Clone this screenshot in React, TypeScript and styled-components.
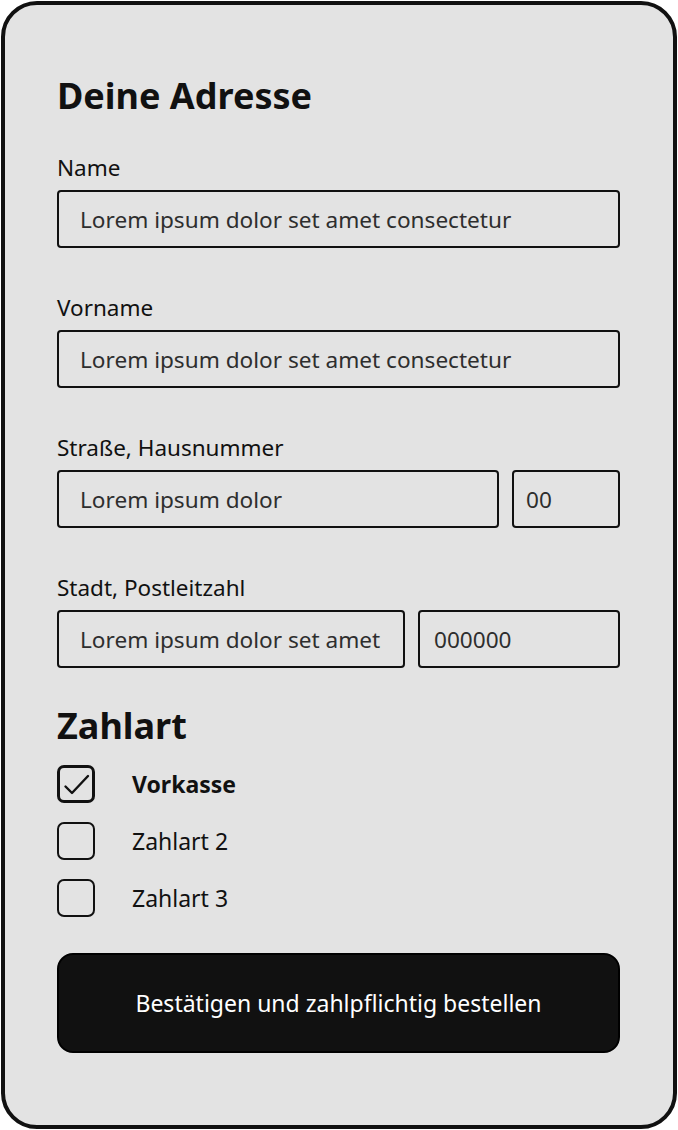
import { FC } from 'react';
import styled, { createGlobalStyle } from 'styled-components';

const GlobalStyle = createGlobalStyle`
  body {
    margin: 0;
    background: #fff;
    font-family: 'Noto Sans', 'Open Sans', sans-serif;
    color: #111;
  }
  * { box-sizing: border-box; }
`;

const Frame = styled.div`
  margin: 1px;
  width: 676px;
  height: 1128px;
  border: 4px solid #111;
  border-radius: 36px;
  background: #e3e3e3;
  padding: 69px 53px 0 52px;
  display: flex;
  flex-direction: column;
`;

const Heading = styled.h2<{ $gap?: number }>`
  margin: 0 0 ${(p) => p.$gap ?? 36}px;
  font-size: 36px;
  line-height: 43px;
  font-weight: 700;
  color: #111;
`;

const Field = styled.div<{ $gap?: number }>`
  display: flex;
  flex-direction: column;
  gap: 7px;
  margin-bottom: ${(p) => p.$gap ?? 45}px;
`;

const Label = styled.label`
  font-size: 22.5px;
  line-height: 30px;
  color: #111;
`;

const InputRow = styled.div`
  display: flex;
  gap: 13px;
`;

const Input = styled.div<{ $w?: number; $pad?: number }>`
  flex: ${(p) => (p.$w ? `0 0 ${p.$w}px` : '1 1 auto')};
  height: 58px;
  border: 2px solid #111;
  border-radius: 4px;
  padding: 0 0 0 ${(p) => p.$pad ?? 21}px;
  display: flex;
  align-items: center;
  font-size: 22.6px;
  color: #2e2e2e;
  white-space: nowrap;
  overflow: hidden;
`;

const Options = styled.div`
  display: flex;
  flex-direction: column;
  gap: 19px;
  margin-bottom: 36px;
`;

const Option = styled.div`
  display: flex;
  align-items: center;
  gap: 37px;
`;

const Box = styled.span<{ $checked?: boolean }>`
  width: 38px;
  height: 38px;
  flex: 0 0 38px;
  border: ${(p) => (p.$checked ? 3 : 2)}px solid #111;
  border-radius: 7px;
  display: flex;
  align-items: center;
  justify-content: center;
`;

const OptionText = styled.span<{ $bold?: boolean }>`
  font-size: 23px;
  font-weight: ${(p) => (p.$bold ? 700 : 400)};
  color: #111;
`;

const Submit = styled.button`
  height: 100px;
  width: 100%;
  border: 2px solid #000;
  border-radius: 16px;
  background: #111;
  color: #fff;
  font-family: inherit;
  font-size: 23px;
  cursor: pointer;
`;

const Check: FC = () => (
  <svg width="38" height="38" viewBox="0 0 38 38" style={{ margin: -3 }}>
    <polyline
      points="8.5,21.5 15,28 31,11"
      fill="none"
      stroke="#111"
      strokeWidth="2.4"
      strokeLinecap="round"
      strokeLinejoin="round"
    />
  </svg>
);

const payments = [
  { label: 'Vorkasse', checked: true },
  { label: 'Zahlart 2', checked: false },
  { label: 'Zahlart 3', checked: false },
];

const App: FC = () => {
  return (
    <>
      <GlobalStyle />
      <Frame>
        <Heading>Deine Adresse</Heading>

        <Field>
          <Label>Name</Label>
          <Input>Lorem ipsum dolor set amet consectetur</Input>
        </Field>

        <Field>
          <Label>Vorname</Label>
          <Input>Lorem ipsum dolor set amet consectetur</Input>
        </Field>

        <Field>
          <Label>Straße, Hausnummer</Label>
          <InputRow>
            <Input>Lorem ipsum dolor</Input>
            <Input $w={108} $pad={12}>00</Input>
          </InputRow>
        </Field>

        <Field $gap={36}>
          <Label>Stadt, Postleitzahl</Label>
          <InputRow>
            <Input>Lorem ipsum dolor set amet</Input>
            <Input $w={202} $pad={14}>000000</Input>
          </InputRow>
        </Field>

        <Heading $gap={18}>Zahlart</Heading>

        <Options>
          {payments.map((p) => (
            <Option key={p.label}>
              <Box $checked={p.checked}>{p.checked && <Check />}</Box>
              <OptionText $bold={p.checked}>{p.label}</OptionText>
            </Option>
          ))}
        </Options>

        <Submit>Bestätigen und zahlpflichtig bestellen</Submit>
      </Frame>
    </>
  );
};

export default App;
